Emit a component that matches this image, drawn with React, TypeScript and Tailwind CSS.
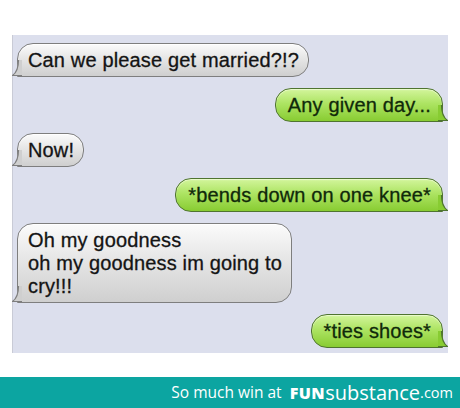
import React from "react";

type Msg = { side: "in" | "out"; lines: string[] };

const messages: Msg[] = [
  { side: "in", lines: ["Can we please get married?!?"] },
  { side: "out", lines: ["Any given day..."] },
  { side: "in", lines: ["Now!"] },
  { side: "out", lines: ["*bends down on one knee*"] },
  { side: "in", lines: ["Oh my goodness", "oh my goodness im going to", "cry!!!"] },
  { side: "out", lines: ["*ties shoes*"] },
];

function Tail({ side }: { side: "in" | "out" }) {
  const fill = side === "in" ? "#cfcfcf" : "#88cc32";
  const stroke = side === "in" ? "#7e7e7e" : "#4f7430";
  const cls =
    side === "in"
      ? "absolute -left-[6px] bottom-0 w-[10px] h-[16px]"
      : "absolute -right-[6px] bottom-0 w-[10px] h-[16px] -scale-x-100";
  return (
    <svg className={cls} viewBox="0 0 10 16">
      <path d="M6 0 L10 0 L10 16 L0 16 C4 13 6 9 6 0 Z" fill={fill} />
      <path d="M6.5 0 C6.5 9 4 13 0.5 15.5 L10 15.5" fill="none" stroke={stroke} strokeWidth="1.2" />
    </svg>
  );
}

function Bubble({ m }: { m: Msg }) {
  const isIn = m.side === "in";
  return (
    <div className={isIn ? "flex justify-start pl-[4px]" : "flex justify-end pr-[5px]"}>
      <div
        className={
          isIn
            ? "relative rounded-[16px] rounded-bl-none border-[1.2px] border-[#7e7e7e] bg-[linear-gradient(to_bottom,#fbfbfb,#e6e6e6_45%,#cfcfcf)] pl-[10px] pr-[9px] pt-[5px] pb-[4px] text-[#141414] shadow-[inset_0_1px_1px_#ffffff]"
            : "relative rounded-[16px] rounded-br-none border-[1.2px] border-[#4f7430] bg-[linear-gradient(to_bottom,#d3f59c,#ade463_45%,#88cc32)] pl-[12px] pr-[11px] pt-[5px] pb-[4px] text-[#10290a] shadow-[inset_0_1px_1px_#ecfbd0]"
        }
      >
        <div className="text-[20px] leading-[23px] tracking-[0.15px] [-webkit-text-stroke:0.3px_currentColor] font-['Liberation_Sans',Arial,sans-serif] whitespace-nowrap">
          {m.lines.map((l, i) => (
            <div key={i}>{l}</div>
          ))}
        </div>
        <Tail side={m.side} />
      </div>
    </div>
  );
}

export default function App() {
  return (
    <div className="w-[460px] h-[408px] bg-white flex flex-col overflow-hidden">
      <div className="mt-[35px] mx-[12px] h-[318px] bg-[#dcdfed] border-l border-[#c9cbd6] pt-[8px] flex flex-col gap-[11px]">
        {messages.map((m, i) => (
          <Bubble key={i} m={m} />
        ))}
      </div>
      <div className="mt-[24px] h-[31px] bg-[#0ca5a1] flex items-center justify-end pr-[7px] font-['Open_Sans',sans-serif] text-white">
        <span className="text-[15.5px] mr-[8px]">So much win at</span>
        <span className="text-[16px] font-extrabold tracking-[0.5px]">FUN</span>
        <span className="text-[20px] leading-none">substance</span>
        <span className="text-[14.5px]">.com</span>
      </div>
    </div>
  );
}
